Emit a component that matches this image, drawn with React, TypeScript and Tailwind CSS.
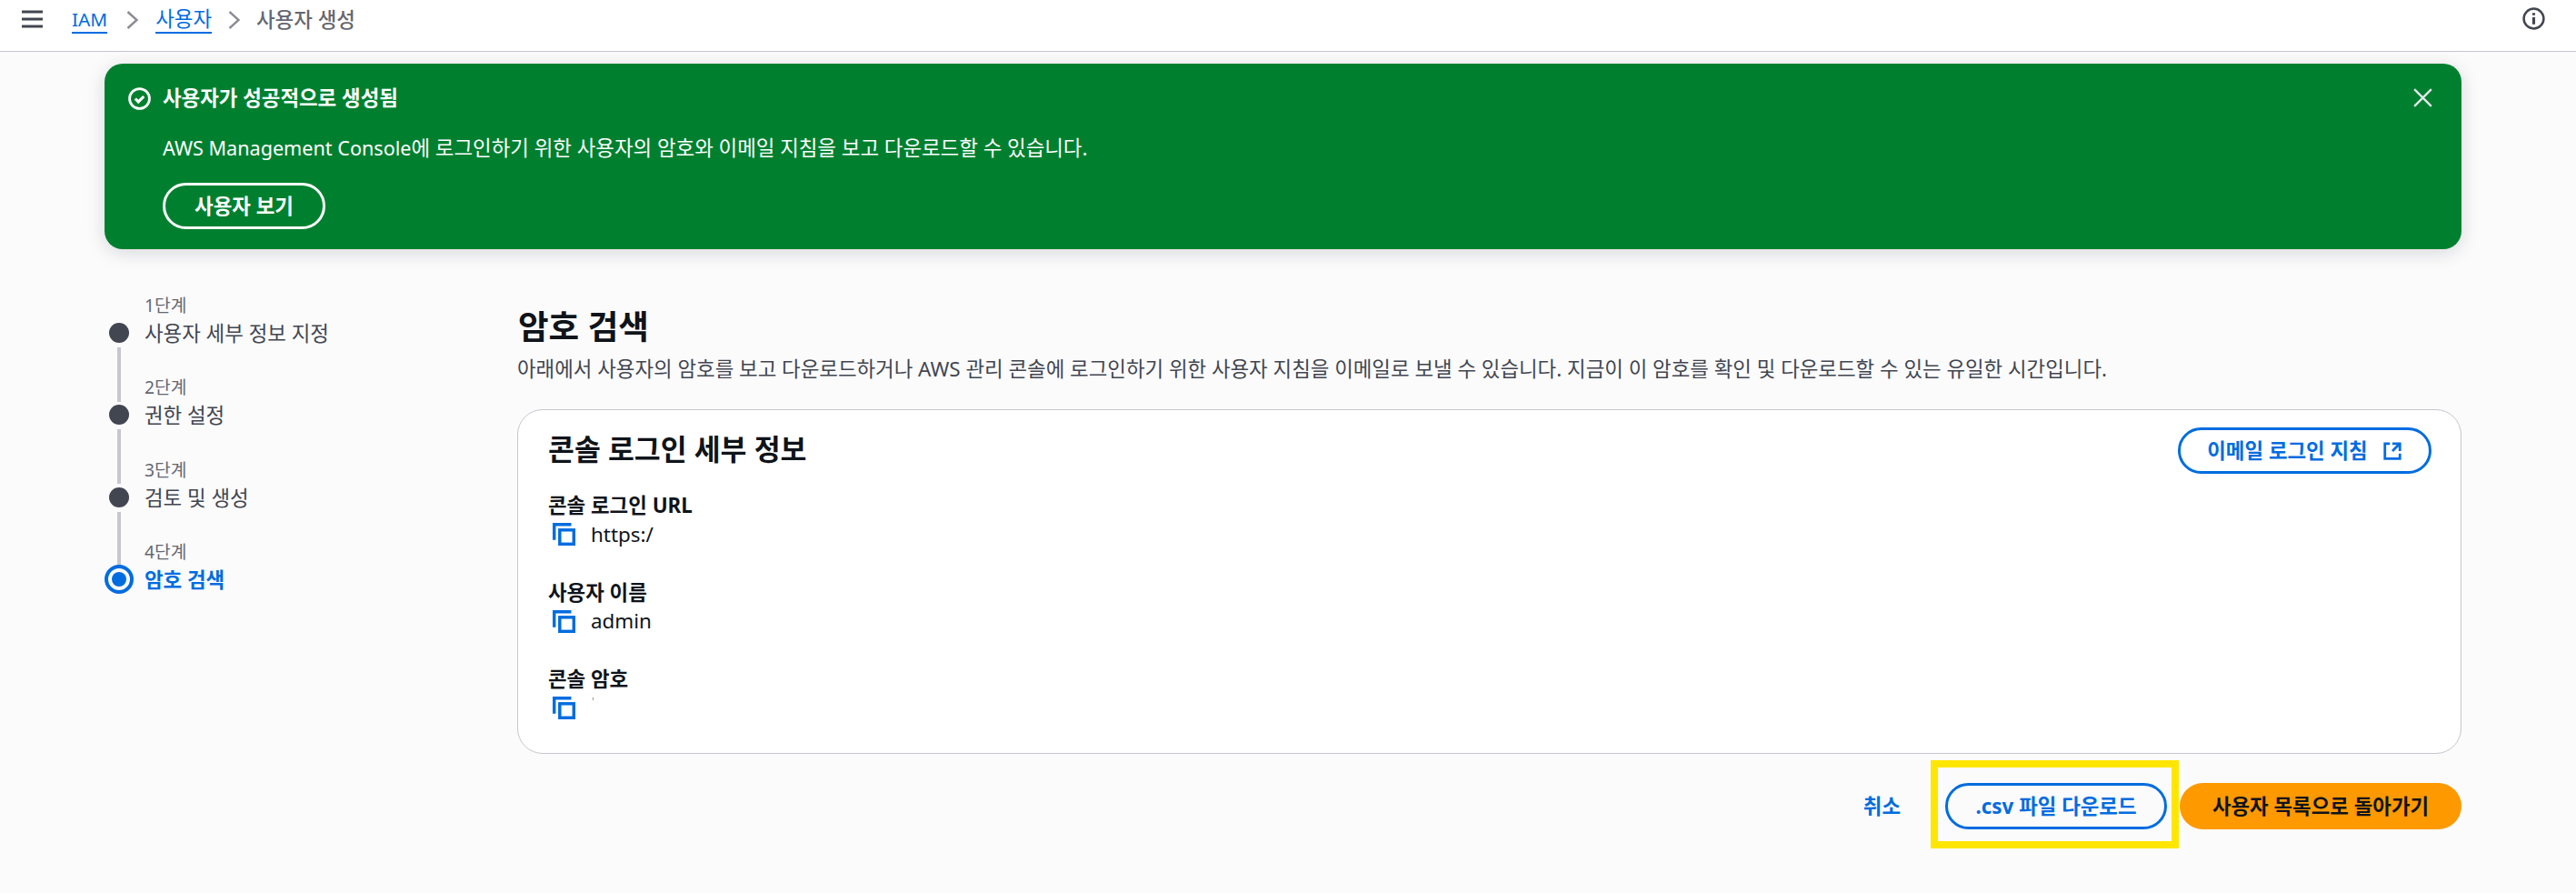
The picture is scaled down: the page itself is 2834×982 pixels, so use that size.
import { ReactNode } from "react";

const steps = [
  { label: "1단계", title: "사용자 세부 정보 지정" },
  { label: "2단계", title: "권한 설정" },
  { label: "3단계", title: "검토 및 생성" },
  { label: "4단계", title: "암호 검색", active: true },
];

const Chevron = () => (
  <svg viewBox="0 0 13 20" className="w-[13px] h-[20px] text-[#8c8c94]" fill="none" stroke="currentColor" strokeWidth="2.5">
    <path d="M1.5 1l10 9-10 9" />
  </svg>
);

const CopyIcon = () => (
  <svg viewBox="0 0 16 16" className="w-[25px] h-[25px] text-[#006ce0] shrink-0" fill="none" stroke="currentColor" strokeWidth="2.2">
    <path d="M1.1 12V1.1h12" />
    <rect x="5" y="5" width="9.9" height="9.9" />
  </svg>
);

const Field = ({ label, children }: { label: string; children: ReactNode }) => (
  <div>
    <div className="text-[22.4px] leading-[28px] font-bold text-[#0f141a]">{label}</div>
    <div className="flex items-center gap-[17px] pl-[5px] mt-[5px] h-[25px] text-[22.4px] text-[#0f141a]">
      <CopyIcon />
      {children}
    </div>
  </div>
);

export default function App() {
  return (
    <div className="min-h-screen bg-[#fbfbfc] font-['Noto_Sans','Noto_Sans_CJK_KR',sans-serif]">
      <header className="h-[57px] bg-white border-b border-[#c6c6cd] flex items-center pl-[24px] pr-[34px] pb-[15px]">
        <svg viewBox="0 0 23 20" className="w-[23px] h-[20px] text-[#424650]" fill="none" stroke="currentColor" strokeWidth="3">
          <path d="M0 2h23M0 10h23M0 18h23" />
        </svg>
        <nav className="flex items-center ml-[32px] mt-[3px] text-[22.4px] leading-[28px]">
          <a className="text-[#006ce0] text-[20.8px] border-b-2 border-[#006ce0] leading-[28px]">IAM</a>
          <span className="ml-[21px] mr-[19px]"><Chevron /></span>
          <a className="text-[#006ce0] border-b-2 border-[#006ce0] leading-[28px]">사용자</a>
          <span className="mx-[18px]"><Chevron /></span>
          <span className="text-[#656871] font-medium">사용자 생성</span>
        </nav>
        <svg viewBox="0 0 16 16" className="w-[25px] h-[25px] ml-auto text-[#424650]" fill="none" stroke="currentColor" strokeWidth="1.6">
          <circle cx="8" cy="8" r="7" />
          <path d="M8 7v5M8 4v1.6" strokeWidth="2" />
        </svg>
      </header>

      <div className="ml-[115px] mr-[126px] pt-[13px]">
        <div className="h-[204px] rounded-[20px] bg-[#00802f] text-white shadow-[0_4px_20px_rgba(15,20,26,0.15)] pt-[24px] pl-[26px] pr-[31px] flex">
          <svg viewBox="0 0 16 16" className="w-[25px] h-[25px] mt-[2px] shrink-0" fill="none" stroke="currentColor" strokeWidth="1.8">
            <circle cx="8" cy="8" r="7" />
            <path d="M5 8l2.2 2.2L11 6.4" strokeWidth="2" />
          </svg>
          <div className="ml-[13px] flex-1">
            <div className="text-[22.4px] leading-[28px] font-bold">사용자가 성공적으로 생성됨</div>
            <p className="text-[22.4px] leading-[28px] mt-[27px]">
              <span className="text-[21.6px]">AWS Management Console</span>에 로그인하기 위한 사용자의 암호와 이메일 지침을 보고 다운로드할 수 있습니다.
            </p>
            <button className="mt-[24px] w-[179px] h-[51px] rounded-full border-[3px] border-white text-[22.4px] font-bold">
              사용자 보기
            </button>
          </div>
          <svg viewBox="0 0 16 16" className="w-[23px] h-[23px] mt-[2px] shrink-0 text-[#e5e7eb]" fill="none" stroke="currentColor" strokeWidth="1.6">
            <path d="M1.5 1.5l13 13M14.5 1.5l-13 13" />
          </svg>
        </div>

        <div className="flex mt-[34px]">
          <ol className="w-[454px] shrink-0">
            {steps.map((step, i) => (
              <li key={step.label} className="relative h-[90.4px] pl-[44px] text-[22.4px]">
                <div className="text-[19.2px] leading-[24px] text-[#656871] pt-[16px]">{step.label}</div>
                <div className={`leading-[28px] mt-[5px] ${step.active ? "text-[#006ce0] font-bold" : "text-[#424650]"}`}>
                  {step.title}
                </div>
                {step.active ? (
                  <span className="absolute left-0 top-[42px] w-[32px] h-[32px] rounded-full border-[4px] border-[#006ce0] flex items-center justify-center">
                    <span className="w-[16px] h-[16px] rounded-full bg-[#006ce0]" />
                  </span>
                ) : (
                  <span className="absolute left-[5px] top-[47px] w-[22px] h-[22px] rounded-full bg-[#424650]" />
                )}
                {i < steps.length - 1 && (
                  <span className="absolute left-[14px] top-[74px] w-[4px] h-[60px] bg-[#c6c6cd]" />
                )}
              </li>
            ))}
          </ol>

          <main className="flex-1 min-w-0 pt-[28px]">
            <h1 className="text-[36.5px] leading-[46px] font-bold text-[#0f141a] pl-[1px]">암호 검색</h1>
            <p className="text-[22.4px] leading-[28px] text-[#424650] mt-[10px]">
              아래에서 사용자의 암호를 보고 다운로드하거나 AWS 관리 콘솔에 로그인하기 위한 사용자 지침을 이메일로 보낼 수 있습니다. 지금이 이 암호를 확인 및 다운로드할 수 있는 유일한 시간입니다.
            </p>
            <section className="mt-[30px] h-[379px] bg-white border border-[#c6c6cd] rounded-[28px] pt-[19px] pl-[33px] pr-[32px]">
              <div className="flex items-start justify-between">
                <h2 className="text-[31.4px] leading-[46px] font-bold text-[#0f141a] mt-[1px]">콘솔 로그인 세부 정보</h2>
                <button className="flex items-center gap-[16px] h-[51px] w-[279px] justify-center rounded-full border-[3px] border-[#006ce0] text-[#006ce0] text-[22.4px] font-bold">
                  이메일 로그인 지침
                  <svg viewBox="0 0 16 16" className="w-[22px] h-[22px]" fill="none" stroke="currentColor" strokeWidth="2">
                    <path d="M14 8V2H8M14 2L8 8M6 2H2v12h12v-4" />
                  </svg>
                </button>
              </div>
              <div className="flex flex-col gap-[37.5px] mt-[21px]">
                <Field label="콘솔 로그인 URL">https:/</Field>
                <Field label="사용자 이름">admin</Field>
                <Field label="콘솔 암호">
                  <span className="text-[#8c8c94] text-[12px] leading-[12px] -mt-[14px] ml-[1px]">'</span>
                </Field>
              </div>
            </section>
            <div className="flex items-center justify-end mt-[32px]">
              <a className="text-[#006ce0] text-[22.4px] font-bold mr-[49px]">취소</a>
              <div className="relative mr-[14px]">
                <button className="block w-[244px] h-[51px] rounded-full border-[3px] border-[#006ce0] text-[#006ce0] text-[22.4px] font-bold">
                  .csv 파일 다운로드
                </button>
                <span className="absolute -left-[16px] -right-[13px] -top-[25px] -bottom-[21px] border-[8px] border-[#ffe600] pointer-events-none" />
              </div>
              <button className="w-[310px] h-[51px] rounded-full bg-[#ff9900] text-[#0f141a] text-[22.4px] font-bold">
                사용자 목록으로 돌아가기
              </button>
            </div>
          </main>
        </div>
      </div>
    </div>
  );
}
